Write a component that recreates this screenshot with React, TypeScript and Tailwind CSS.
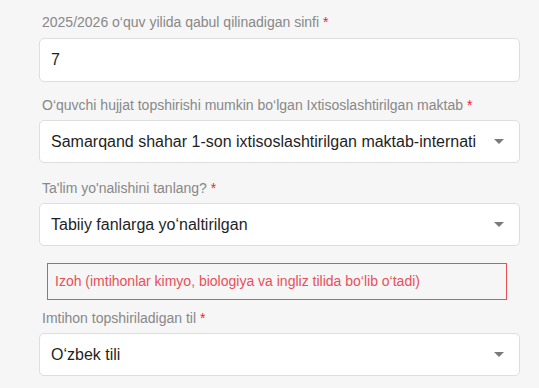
import type { ReactNode } from 'react';

function Label({ children }: { children: ReactNode }) {
    return (
        <div className="pl-[3px] text-[14px] leading-[20px] text-[#888888]">
            {children} <span className="text-[#f4212e]">*</span>
        </div>
    );
}

function Caret() {
    return (
        <svg width="10" height="5" viewBox="0 0 10 5" className="shrink-0">
            <path d="M0 0 H10 L5 5 Z" fill="#7a7a7a" />
        </svg>
    );
}

function SelectBox({ value }: { value: string }) {
    return (
        <div className="mt-[5px] flex h-[43px] items-center rounded-[5px] border border-[#dedede] bg-white pl-[11px] pr-[15px]">
            <div className="flex-1 overflow-hidden whitespace-nowrap pr-[27px] text-[16px] text-[#1f1f1f]">
                {value}
            </div>
            <Caret />
        </div>
    );
}

export default function App() {
    return (
        <div
            className="min-h-[388px] w-[539px] bg-[#f6f6f6] pl-[39px] pr-[19px] pt-[12px]"
            style={{ fontFamily: '"Liberation Sans", Arial, sans-serif' }}
        >
            {/* Grade */}
            <Label>2025/2026 o‘quv yilida qabul qilinadigan sinfi</Label>
            <div className="mt-[6px] flex h-[44px] items-center rounded-[5px] border border-[#dedede] bg-white pl-[11px] text-[16px] text-[#1f1f1f]">
                7
            </div>

            {/* School */}
            <div className="mt-[13px]">
                <Label>O‘quvchi hujjat topshirishi mumkin bo‘lgan Ixtisoslashtirilgan maktab</Label>
                <SelectBox value="Samarqand shahar 1-son ixtisoslashtirilgan maktab-internati" />
            </div>

            {/* Direction */}
            <div className="mt-[15px]">
                <Label>Ta'lim yo'nalishini tanlang?</Label>
                <SelectBox value="Tabiiy fanlarga yo‘naltirilgan" />
            </div>

            <div className="ml-2 mr-[13px] mt-[17px] border border-[#ea4f55] px-[7px] pb-[8px] pt-[7px] text-[14px] leading-[20px] text-[#e8505a]">
                Izoh (imtihonlar kimyo, biologiya va ingliz tilida bo‘lib o‘tadi)
            </div>

            {/* Language */}
            <div className="mt-[8px]">
                <Label>Imtihon topshiriladigan til</Label>
                <SelectBox value="O‘zbek tili" />
            </div>
        </div>
    );
}
